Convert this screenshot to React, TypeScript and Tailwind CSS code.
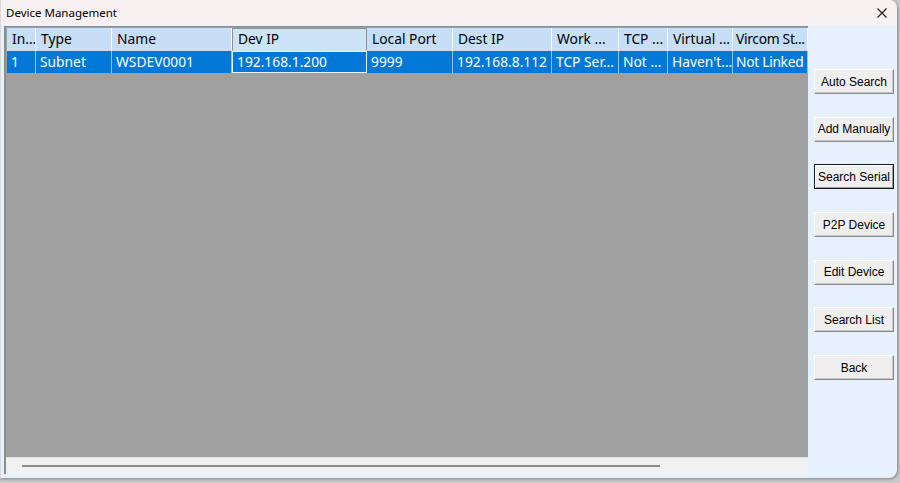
import React from "react";

const cols = [
  { h: "In...", w: 29, v: "1" },
  { h: "Type", w: 76, v: "Subnet" },
  { h: "Name", w: 120, v: "WSDEV0001" },
  { h: "Dev IP", w: 135, v: "192.168.1.200", focus: true },
  { h: "Local Port", w: 86, v: "9999" },
  { h: "Dest IP", w: 99, v: "192.168.8.112" },
  { h: "Work ...", w: 67, v: "TCP Ser..." },
  { h: "TCP ...", w: 49, v: "Not ..." },
  { h: "Virtual ...", w: 65, v: "Haven't..." },
  { h: "Vircom St...", w: 75, v: "Not Linked", tight: true },
];

const buttons = [
  "Auto Search",
  "Add Manually",
  "Search Serial",
  "P2P Device",
  "Edit Device",
  "Search List",
  "Back",
];

export default function App() {
  return (
    <div className="w-[900px] h-[483px] bg-[#c9c9c9] overflow-hidden relative">
      <div className="w-[897px] h-[478px] bg-[#e7f1fd] rounded-tr-[8px] rounded-br-[8px] border-l border-[#d8d8d8] shadow-[1px_1px_3px_rgba(0,0,0,0.35)] flex flex-col overflow-hidden">
        {/* title bar */}
        <div className="h-[25px] shrink-0 bg-[#f7f1f2] flex items-center justify-between pl-[5px] pr-[9px]">
          <span className="text-[11.5px] text-black" style={{ fontFamily: '"Noto Sans", "Open Sans", sans-serif' }}>
            Device Management
          </span>
          <svg width="12" height="12" viewBox="0 0 12 12" className="mt-[1px]">
            <path d="M1.5 1.5 L10.5 10.5 M10.5 1.5 L1.5 10.5" stroke="#222" strokeWidth="1.2" />
          </svg>
        </div>
        {/* body */}
        <div className="flex flex-1 min-h-0">
          {/* list */}
          <div
            className="ml-[3px] mt-[1px] mb-[4px] w-[804px] flex flex-col border-l-2 border-t border-[#8c8c8c] bg-[#a0a0a0]"
            style={{ fontFamily: '"Noto Sans", "Open Sans", sans-serif' }}
          >
            <div className="flex h-[24px] shrink-0 pl-[1px] pt-[1px]">
              {cols.map((c) => (
                <div
                  key={c.h}
                  style={{ width: c.w }}
                  className={
                    "shrink-0 flex items-center text-[13.8px] text-black whitespace-nowrap overflow-hidden " +
                    (c.tight ? "pl-[3px] tracking-[-0.3px] " : "pl-[5px] ") +
                    (c.focus
                      ? "bg-[#cce4f8] border border-[#8f8f8f] border-b-[#cce4f8]"
                      : "bg-[#c6def6] border-r border-[#f4f8fc]")
                  }
                >
                  {c.h}
                </div>
              ))}
            </div>
            <div className="flex h-[22px] shrink-0 pl-[1px]">
              {cols.map((c) => (
                <div
                  key={c.h}
                  style={{ width: c.w }}
                  className={
                    "shrink-0 flex items-center text-[13.8px] text-white whitespace-nowrap overflow-hidden bg-[#0078d7] " +
                    (c.tight ? "pl-[3px] tracking-[-0.3px] " : "pl-[4px] ") +
                    (c.focus ? "border border-[#e8f2ff]" : "border-r border-[#8cc4ef]")
                  }
                >
                  {c.v}
                </div>
              ))}
            </div>
            <div className="flex-1" />
            <div className="h-[17px] shrink-0 bg-[#f0f0f0] flex items-center pl-[16px] border-t border-[#e2e2e2]">
              <div className="w-[638px] h-[2px] bg-[#8a8a8a]" />
            </div>
          </div>
          {/* buttons */}
          <div className="flex flex-col pl-[6px] pt-[44px] gap-[22.7px]" style={{ fontFamily: '"Liberation Sans", Arial, sans-serif' }}>
            {buttons.map((b) => (
              <div
                key={b}
                className={
                  "w-[80px] h-[25px] flex items-center justify-center text-[12px] text-black bg-[#efefef] whitespace-nowrap " +
                  (b === "Search Serial"
                    ? "border border-[#1a1a1a] shadow-[inset_1px_1px_0_#ffffff,inset_-1px_-1px_0_#a0a0a0]"
                    : "border-t border-l border-[#ffffff] border-r border-b border-r-[#8a8a8a] border-b-[#8a8a8a] shadow-[inset_-1px_-1px_0_#c8c8c8]")
                }
              >
                {b}
              </div>
            ))}
          </div>
        </div>
      </div>
    </div>
  );
}
